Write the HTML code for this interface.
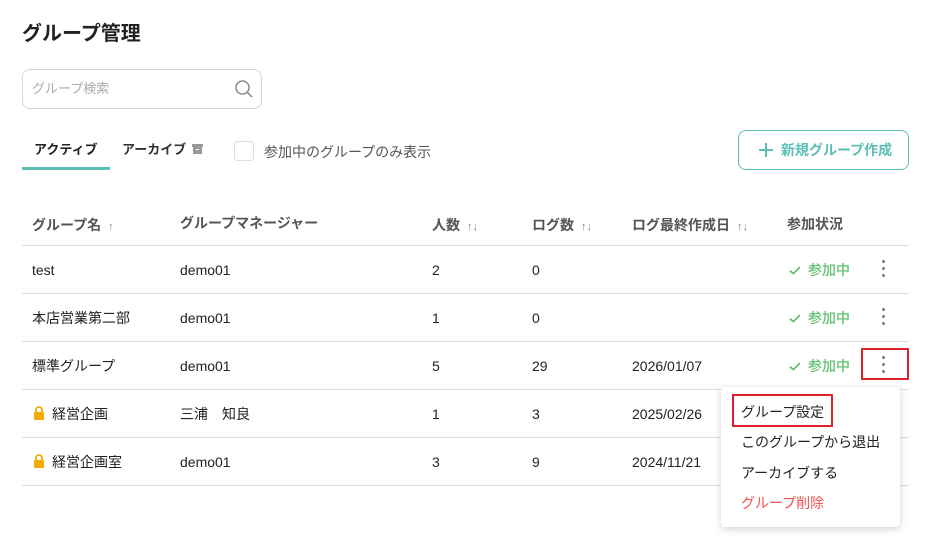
<!DOCTYPE html>
<html><head><meta charset="utf-8"><style>
*{margin:0;padding:0;box-sizing:border-box}
body{width:933px;height:546px;background:#fff;font-family:"Liberation Sans","Noto Sans CJK JP",sans-serif;color:#222;position:relative;overflow:hidden}
.a{position:absolute;white-space:nowrap}
.t{font-size:14px;line-height:20px}
.h{font-size:14px;font-weight:bold;color:#555;line-height:20px}
.line{position:absolute;left:22px;width:887px;height:1px;background:#ddd}
.ok{color:#5cbf6c;font-size:14px;line-height:20px;font-weight:500}
.dots{position:absolute;width:4px}
.dots i{display:block;width:3px;height:3px;background:#777;border-radius:50%;margin-bottom:4px}
.sort{color:#888;font-size:11px;font-weight:normal}
</style></head><body>
<div class="a" style="left:22px;top:20px;font-size:20px;font-weight:bold;line-height:28px">グループ管理</div>
<div class="a" style="left:22px;top:69px;width:240px;height:40px;border:1px solid #d6d6d6;border-radius:8px"></div>
<div class="a" style="left:32px;top:80px;font-size:13px;color:#aaa;line-height:18px">グループ検索</div>
<svg class="a" style="left:234px;top:79px" width="20" height="20" viewBox="0 0 20 20"><circle cx="8.5" cy="8.5" r="6.5" fill="none" stroke="#888" stroke-width="1.5"/><line x1="13.3" y1="13.3" x2="18" y2="18" stroke="#888" stroke-width="1.5"/></svg>

<div class="a" style="left:34px;top:141px;font-size:13px;font-weight:bold;line-height:18px">アクティブ</div>
<div class="a" style="left:22px;top:167px;width:88px;height:3px;background:#5bbfb5"></div>
<div class="a" style="left:122px;top:141px;font-size:13px;font-weight:bold;line-height:18px;color:#333">アーカイブ</div>
<svg class="a" style="left:192px;top:144px" width="11" height="11" viewBox="0 0 11 11"><rect x="0" y="0" width="11" height="3" fill="#999"/><rect x="1" y="3" width="9" height="7" fill="#999"/><rect x="4" y="5" width="3" height="1" fill="#fff"/></svg>
<div class="a" style="left:234px;top:141px;width:20px;height:20px;border:1px solid #ddd;border-radius:3px"></div>
<div class="a" style="left:264px;top:142px;font-size:14px;color:#555;line-height:20px">参加中のグループのみ表示</div>

<div class="a" style="left:738px;top:130px;width:171px;height:40px;border:1px solid #5bbfb5;border-radius:8px"></div>
<svg class="a" style="left:758px;top:142px" width="16" height="16" viewBox="0 0 16 16"><path d="M8 1v14M1 8h14" stroke="#5bbfb5" stroke-width="2"/></svg>
<div class="a" style="left:781px;top:140px;font-size:14px;font-weight:bold;color:#5bbfb5;line-height:20px">新規グループ作成</div>

<div class="a h" style="left:32px;top:215px">グループ名 <span class="sort">&nbsp;↑</span></div>
<div class="a h" style="left:180px;top:213px">グループマネージャー</div>
<div class="a h" style="left:432px;top:215px">人数 <span class="sort">&nbsp;↑↓</span></div>
<div class="a h" style="left:532px;top:215px">ログ数 <span class="sort">&nbsp;↑↓</span></div>
<div class="a h" style="left:632px;top:215px">ログ最終作成日 <span class="sort">&nbsp;↑↓</span></div>
<div class="a h" style="left:787px;top:214px">参加状況</div>
<div class="line" style="top:245px"></div>

<svg width="0" height="0" style="position:absolute"><defs><symbol id="ck" viewBox="0 0 14 14"><path d="M2 7.5l3.2 3.2L12 4" fill="none" stroke="#5cbf6c" stroke-width="1.6"/></symbol></defs></svg>

<div class="a t" style="left:32px;top:260px">test</div><div class="a t" style="left:180px;top:260px">demo01</div><div class="a t" style="left:432px;top:260px">2</div><div class="a t" style="left:532px;top:260px">0</div>
<svg class="a" style="left:788px;top:263px" width="14" height="14"><use href="#ck"/></svg><div class="a ok" style="left:808px;top:260px">参加中</div><div class="dots" style="left:882px;top:260px"><i></i><i></i><i></i></div>
<div class="line" style="top:293px"></div>

<div class="a t" style="left:32px;top:308px">本店営業第二部</div><div class="a t" style="left:180px;top:308px">demo01</div><div class="a t" style="left:432px;top:308px">1</div><div class="a t" style="left:532px;top:308px">0</div>
<svg class="a" style="left:788px;top:311px" width="14" height="14"><use href="#ck"/></svg><div class="a ok" style="left:808px;top:308px">参加中</div><div class="dots" style="left:882px;top:308px"><i></i><i></i><i></i></div>
<div class="line" style="top:341px"></div>

<div class="a t" style="left:32px;top:356px">標準グループ</div><div class="a t" style="left:180px;top:356px">demo01</div><div class="a t" style="left:432px;top:356px">5</div><div class="a t" style="left:532px;top:356px">29</div><div class="a t" style="left:632px;top:356px">2026/01/07</div>
<svg class="a" style="left:788px;top:359px" width="14" height="14"><use href="#ck"/></svg><div class="a ok" style="left:808px;top:356px">参加中</div><div class="dots" style="left:882px;top:356px"><i></i><i></i><i></i></div>
<div class="a" style="left:861px;top:348px;width:48px;height:32px;border:2px solid #e0202a"></div>
<div class="line" style="top:389px"></div>

<svg class="a" style="left:33px;top:406px" width="12" height="14" viewBox="0 0 12 14"><path d="M3 6V4a3 3 0 0 1 6 0v2" fill="none" stroke="#f5a800" stroke-width="1.8"/><rect x="1" y="6" width="10" height="8" rx="1" fill="#f5a800"/></svg>
<div class="a t" style="left:52px;top:404px">経営企画</div><div class="a t" style="left:180px;top:404px">三浦　知良</div><div class="a t" style="left:432px;top:404px">1</div><div class="a t" style="left:532px;top:404px">3</div><div class="a t" style="left:632px;top:404px">2025/02/26</div>
<div class="line" style="top:437px"></div>

<svg class="a" style="left:33px;top:454px" width="12" height="14" viewBox="0 0 12 14"><path d="M3 6V4a3 3 0 0 1 6 0v2" fill="none" stroke="#f5a800" stroke-width="1.8"/><rect x="1" y="6" width="10" height="8" rx="1" fill="#f5a800"/></svg>
<div class="a t" style="left:52px;top:452px">経営企画室</div><div class="a t" style="left:180px;top:452px">demo01</div><div class="a t" style="left:432px;top:452px">3</div><div class="a t" style="left:532px;top:452px">9</div><div class="a t" style="left:632px;top:452px">2024/11/21</div>
<div class="line" style="top:485px"></div>

<div class="a" style="left:721px;top:387px;width:179px;height:140px;background:#fff;border-radius:4px;box-shadow:0 2px 8px rgba(0,0,0,0.18)"></div>
<div class="a" style="left:732px;top:394px;width:101px;height:33px;border:2px solid #e0202a"></div>
<div class="a t" style="left:741px;top:402px">グループ設定</div>
<div class="a t" style="left:741px;top:432px">このグループから退出</div>
<div class="a t" style="left:741px;top:463px">アーカイブする</div>
<div class="a t" style="left:741px;top:493px;color:#f0504a">グループ削除</div>
</body></html>
